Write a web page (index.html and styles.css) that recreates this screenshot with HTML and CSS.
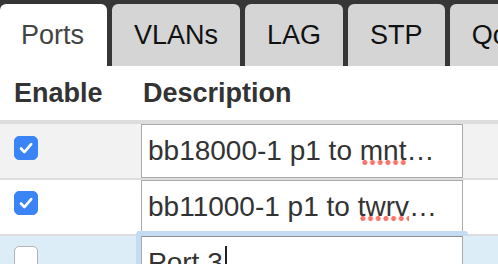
FILE: index.html
```html
<!DOCTYPE html>
<html lang="en">
<head>
    <meta charset="UTF-8">
    <meta name="viewport" content="width=device-width, initial-scale=1.0">
    <title>Switch Ports</title>
    <link rel="stylesheet" href="styles.css">
</head>
<body>
    <div class="tabs">
        <div class="tab active">Ports</div>
        <div class="tab">VLANs</div>
        <div class="tab">LAG</div>
        <div class="tab">STP</div>
        <div class="tab">QoS</div>
    </div>

    <table class="ports">
        <thead>
            <tr>
                <th class="col-enable">Enable</th>
                <th class="col-desc">Description</th>
                <th></th>
            </tr>
        </thead>
        <tbody>
            <tr class="striped">
                <td class="col-enable">
                    <span class="check on">
                        <svg viewBox="0 0 24 24" width="24" height="24"><path d="M7 12.5l3.4 3.6 6.8-8" fill="none" stroke="#fff" stroke-width="2.6" stroke-linecap="round" stroke-linejoin="round"/></svg>
                    </span>
                </td>
                <td class="col-desc">
                    <div class="field">bb18000-1 p1 to <span class="misspelled">mnt</span>…</div>
                </td>
                <td></td>
            </tr>
            <tr>
                <td class="col-enable">
                    <span class="check on">
                        <svg viewBox="0 0 24 24" width="24" height="24"><path d="M7 12.5l3.4 3.6 6.8-8" fill="none" stroke="#fff" stroke-width="2.6" stroke-linecap="round" stroke-linejoin="round"/></svg>
                    </span>
                </td>
                <td class="col-desc">
                    <div class="field">bb11000-1 p1 to <span class="misspelled">twrv</span>…</div>
                </td>
                <td></td>
            </tr>
            <tr class="hover">
                <td class="col-enable">
                    <span class="check"></span>
                </td>
                <td class="col-desc">
                    <div class="field focused">Port 3<span class="caret"></span></div>
                </td>
                <td></td>
            </tr>
        </tbody>
    </table>
</body>
</html>
```

FILE: styles.css
```css
body {
    margin: 0;
    font-family: "Liberation Sans", Arial, sans-serif;
    color: #333;
    background: #fff;
    overflow: hidden;
}

.tabs {
    display: flex;
    background: #363636;
    padding-top: 4px;
    white-space: nowrap;
}

.tab {
    flex: none;
    height: 62px;
    line-height: 62px;
    padding: 0 22px;
    margin-right: 5px;
    border-radius: 6px 6px 0 0;
    background: #d5d5d5;
    color: #111;
    font-size: 27px;
}

.tab.active {
    background: #fff;
    color: #444;
    padding: 0 23px 0 21px;
}

.ports {
    width: 100%;
    border-spacing: 0;
    table-layout: fixed;
}

.ports th {
    height: 54px;
    padding: 0;
    text-align: left;
    font-size: 27px;
    font-weight: bold;
    color: #333;
    border-bottom: 4px solid #ddd;
}

.ports td {
    height: 53px;
    padding: 0;
    vertical-align: top;
    border-bottom: 2px solid #ddd;
}

.ports .col-enable {
    width: 127px;
    padding-left: 14px;
}

.ports th.col-desc {
    width: 320px;
    padding-left: 2px;
}

.ports td.col-desc {
    width: 322px;
}

.ports tr.striped td {
    background: #f2f2f2;
}

.ports tr.hover td {
    background: #dcedf8;
}

.check {
    display: block;
    width: 24px;
    height: 24px;
    margin-top: 12px;
    box-sizing: border-box;
    border-radius: 5px;
    background: #fff;
    border: 1px solid #b4b4b4;
}

.check.on {
    background: #3b84f5;
    border-color: #3b84f5;
}

.check svg {
    display: block;
    margin: -1px;
}

tr + tr .check {
    margin-top: 11px;
}

tr.hover .check {
    margin-top: 10px;
}

.field {
    height: 54px;
    box-sizing: border-box;
    border: 1px solid #ababab;
    background: #fff;
    padding-left: 6px;
    font-size: 28px;
    line-height: 52px;
    color: #333;
    white-space: nowrap;
    overflow: hidden;
}

.field.focused {
    border-color: #8c8c8c #ababab #ababab;
    border-radius: 1px;
    box-shadow: 0 0 0 5px #c4dbf4;
}

.misspelled {
    background-image: radial-gradient(circle, #f7766a 2.2px, transparent 2.8px);
    background-size: 7.7px 5px;
    background-repeat: repeat-x;
    background-position: 1px calc(100% - 1px);
}

.caret {
    display: inline-block;
    width: 2px;
    height: 32px;
    margin-left: 2px;
    vertical-align: -6px;
    background: #222;
}
```
